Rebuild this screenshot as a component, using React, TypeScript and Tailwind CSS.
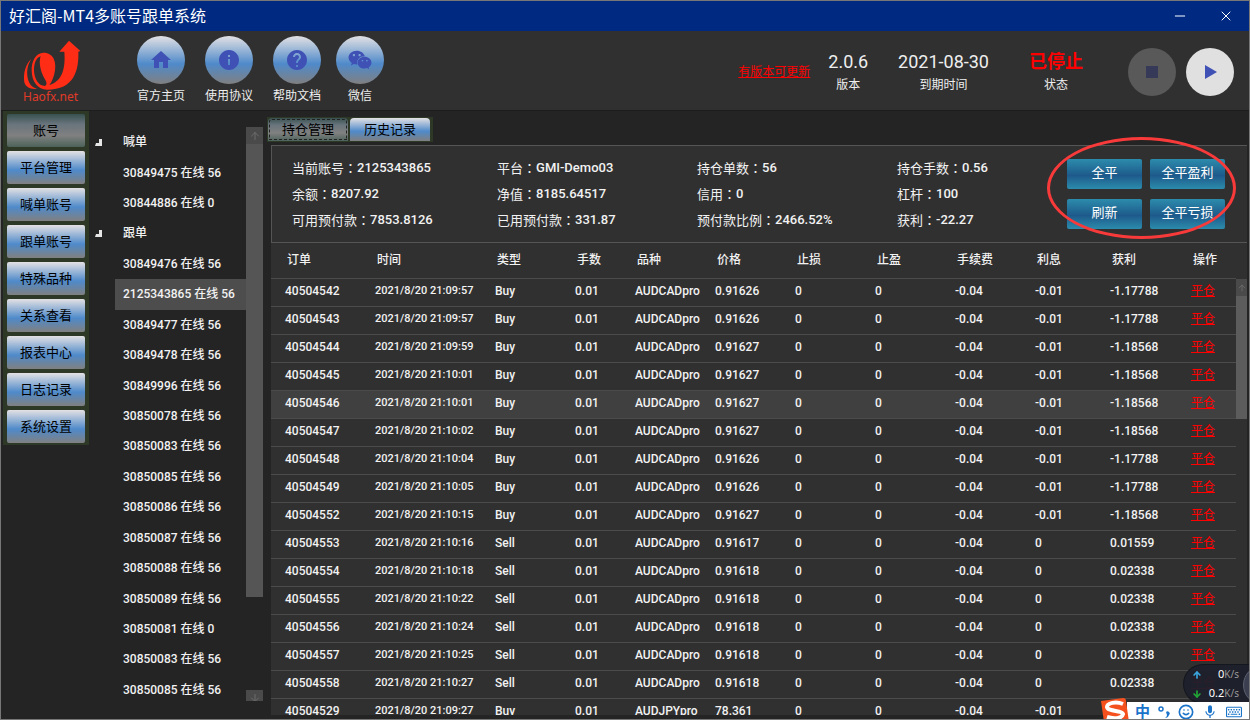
import React from 'react';
import { ArrowDown, ArrowUp, Minus, Smile, X } from 'lucide-react';
import { MdHelp, MdHome, MdInfo, MdMic } from 'react-icons/md';
import { FaRegKeyboard, FaWeixin } from 'react-icons/fa';

const glossy = 'bg-[linear-gradient(180deg,#e3e1e3_0%,#4f8aca_58%,#808080_100%)]';
const glossyActive = 'bg-[linear-gradient(180deg,#38504f_0%,#68747c_30%,#808080_65%,#4c635a_100%)]';

const shortcuts = [
  { label: '官方主页', icon: MdHome, gap: 'mr-5' },
  { label: '使用协议', icon: MdInfo, gap: 'mr-5' },
  { label: '帮助文档', icon: MdHelp, gap: 'mr-[15px]' },
  { label: '微信', icon: FaWeixin, gap: '' },
];

const menu = ['账号', '平台管理', '喊单账号', '跟单账号', '特殊品种', '关系查看', '报表中心', '日志记录', '系统设置'];

const tree = [
  { label: '喊单', group: true },
  { label: '30849475 在线 56' },
  { label: '30844886 在线 0' },
  { label: '跟单', group: true },
  { label: '30849476 在线 56' },
  { label: '2125343865 在线 56' },
  { label: '30849477 在线 56' },
  { label: '30849478 在线 56' },
  { label: '30849996 在线 56' },
  { label: '30850078 在线 56' },
  { label: '30850083 在线 56' },
  { label: '30850085 在线 56' },
  { label: '30850086 在线 56' },
  { label: '30850087 在线 56' },
  { label: '30850088 在线 56' },
  { label: '30850089 在线 56' },
  { label: '30850081 在线 0' },
  { label: '30850083 在线 56' },
  { label: '30850085 在线 56' },
];

const summary = [
  ['当前账号', '2125343865'],
  ['平台', 'GMI-Demo03'],
  ['持仓单数', '56'],
  ['持仓手数', '0.56'],
  ['余额', '8207.92'],
  ['净值', '8185.64517'],
  ['信用', '0'],
  ['杠杆', '100'],
  ['可用预付款', '7853.8126'],
  ['已用预付款', '331.87'],
  ['预付款比例', '2466.52%'],
  ['获利', '-22.27'],
];

const columns = [
  { label: '订单', width: 'w-[90px]' },
  { label: '时间', width: 'w-[120px]' },
  { label: '类型', width: 'w-20' },
  { label: '手数', width: 'w-[60px]' },
  { label: '品种', width: 'w-20' },
  { label: '价格', width: 'w-20' },
  { label: '止损', width: 'w-20' },
  { label: '止盈', width: 'w-20' },
  { label: '手续费', width: 'w-20' },
  { label: '利息', width: 'w-[75px]' },
  { label: '获利', width: 'w-[81px]' },
  { label: '操作', width: '' },
];

// id, time, side, symbol, price, swap, profit
const orders = [
  ['40504542', '21:09:57', 'Buy', 'AUDCADpro', '0.91626', '-0.01', '-1.17788'],
  ['40504543', '21:09:57', 'Buy', 'AUDCADpro', '0.91626', '-0.01', '-1.17788'],
  ['40504544', '21:09:59', 'Buy', 'AUDCADpro', '0.91627', '-0.01', '-1.18568'],
  ['40504545', '21:10:01', 'Buy', 'AUDCADpro', '0.91627', '-0.01', '-1.18568'],
  ['40504546', '21:10:01', 'Buy', 'AUDCADpro', '0.91627', '-0.01', '-1.18568'],
  ['40504547', '21:10:02', 'Buy', 'AUDCADpro', '0.91627', '-0.01', '-1.18568'],
  ['40504548', '21:10:04', 'Buy', 'AUDCADpro', '0.91626', '-0.01', '-1.17788'],
  ['40504549', '21:10:05', 'Buy', 'AUDCADpro', '0.91626', '-0.01', '-1.17788'],
  ['40504552', '21:10:15', 'Buy', 'AUDCADpro', '0.91627', '-0.01', '-1.18568'],
  ['40504553', '21:10:16', 'Sell', 'AUDCADpro', '0.91617', '0', '0.01559'],
  ['40504554', '21:10:18', 'Sell', 'AUDCADpro', '0.91618', '0', '0.02338'],
  ['40504555', '21:10:22', 'Sell', 'AUDCADpro', '0.91618', '0', '0.02338'],
  ['40504556', '21:10:24', 'Sell', 'AUDCADpro', '0.91618', '0', '0.02338'],
  ['40504557', '21:10:25', 'Sell', 'AUDCADpro', '0.91618', '0', '0.02338'],
  ['40504558', '21:10:27', 'Sell', 'AUDCADpro', '0.91618', '0', '0.02338'],
  ['40504529', '21:09:27', 'Buy', 'AUDJPYpro', '78.361', '-0.01', ''],
];

function Logo() {
  return (
    <svg viewBox="68 115 174 150" className="w-[58px] text-[#ff2d16]" fill="currentColor">
      <path
        fillRule="evenodd"
        d="M206 117 L240 148 L234 150 C236 205 222 264 140 264 C112 264 95 240 94 208 C93 178 106 153 130 153 C160 153 168 182 164 206 C161 226 155 240 147 250 C186 238 196 200 192 150 L177 150 Z M121 164 C107 168 101 186 101 206 C102 232 114 253 134 253 C142 248 138 240 132 230 C122 212 114 184 121 164 Z"
      />
      <path d="M93 172 C76 186 68 216 72 242 C76 258 94 264 110 261 C92 256 83 242 81 222 C79 202 84 186 93 172 Z" />
    </svg>
  );
}

function Header() {
  return (
    <header className="flex h-20 shrink-0 items-center border-b border-[#1d1d1d] bg-[#303030]">
      <div className="ml-[22px] w-[60px] pt-0.5">
        <Logo />
        <div className="font-['Noto_Sans',sans-serif] text-xs leading-[14px] text-[#e03a28]">Haofx.net</div>
      </div>
      <nav className="ml-[54px] flex">
        {shortcuts.map((s) => {
          const Icon = s.icon;
          return (
            <button key={s.label} className={`flex flex-col items-center text-xs text-[#eee] ${s.gap}`}>
              <span className={`flex size-12 items-center justify-center rounded-full ${glossy}`}>
                <Icon className="size-6 text-[#3f51b5]" />
              </span>
              <span className="mt-[3px] leading-[18px]">{s.label}</span>
            </button>
          );
        })}
      </nav>
      <div className="ml-auto flex items-center pt-0.5 pr-[15px] text-xs text-[#eee]">
        <a href="#update" className="mr-[18px] text-[#f00] underline">有版本可更新</a>
        <div className="mr-[30px] pt-[3px] text-center">
          <div className="text-lg leading-6">2.0.6</div>
          <div className="leading-[22px]">版本</div>
        </div>
        <div className="mr-10 pt-[3px] text-center">
          <div className="text-lg leading-6">2021-08-30</div>
          <div className="leading-[22px]">到期时间</div>
        </div>
        <div className="mr-[45px] pt-[3px] text-center">
          <div className="text-lg leading-6 font-bold text-[#f00]">已停止</div>
          <div className="leading-[22px]">状态</div>
        </div>
        <button aria-label="停止" className="mr-2.5 flex size-12 items-center justify-center rounded-full bg-[#595959]">
          <span className="size-3 bg-[#363a58]" />
        </button>
        <button aria-label="启动" className="flex size-12 items-center justify-center rounded-full bg-[#e0e0e0]">
          <svg viewBox="0 0 12 14" className="ml-0.5 h-3.5 w-3" fill="#3f51b5">
            <path d="M0 0 L12 7 L0 14 Z" />
          </svg>
        </button>
      </div>
    </header>
  );
}

function SideMenu() {
  const [active, setActive] = React.useState('账号');
  return (
    <nav className="ml-0.5 flex w-[86px] shrink-0 flex-col gap-1 self-start bg-[#2e3827] px-1 pt-[3px] pb-0.5">
      {menu.map((item) => (
        <button
          key={item}
          onClick={() => setActive(item)}
          className={`h-[33px] rounded-xs text-[13px] text-black ${active === item ? glossyActive : glossy}`}
        >
          {item}
        </button>
      ))}
    </nav>
  );
}

function AccountTree() {
  return (
    <div className="flex w-[174px] shrink-0 pt-4 pb-[14px]">
      <ul className="flex flex-1 flex-col text-xs font-medium text-[#f2f2f2]">
        {tree.map((node, i) => (
          <li key={i} className="flex flex-1 items-center">
            <span className="flex w-[26px] justify-center pr-2">
              {node.group && (
                <button aria-label={`折叠${node.label}`}>
                  <svg viewBox="0 0 7 7" className="size-[7px]" fill="#e6e6e6">
                    <path d="M4 0 H7 V7 H0 L1 4 H4 Z" />
                  </svg>
                </button>
              )}
            </span>
            <span className={`flex flex-1 items-center self-stretch pl-2 whitespace-nowrap ${i === 5 ? 'bg-[#4d4d4d]' : ''}`}>
              {node.label}
            </span>
          </li>
        ))}
      </ul>
      <div className="flex w-[17px] flex-col justify-between">
        <div className="flex h-[470px] justify-center bg-[#555]">
          <span className="flex h-[17px] w-full items-center justify-center bg-[#4a4a4a]">
            <ArrowUp className="size-3 text-[#6c6c6c]" />
          </span>
        </div>
        <div className="mb-1 flex h-[11px] justify-center overflow-hidden bg-[#4a4a4a]">
          <ArrowDown className="mt-0.5 size-3 shrink-0 text-[#6c6c6c]" />
        </div>
      </div>
    </div>
  );
}

function Summary() {
  const action = 'h-[30px] rounded-xs bg-[linear-gradient(180deg,#2c8cad_0%,#1d5a8b_55%,#2c8cad_100%)] pb-0.5 text-[13px] text-white';
  return (
    <section className="flex h-[98px] shrink-0 border border-r-0 border-[#555] bg-[#303030] pt-[10px]">
      <dl className="grid grid-cols-[205px_200px_200px_150px] content-start gap-y-px pl-5 text-[13px] leading-6 text-[#f2f2f2]">
        {summary.map(([label, value]) => (
          <div key={label} className="flex h-[25px]">
            <dt>
              {label}
              <span className="font-['Noto_Sans_CJK_TC',sans-serif]">：</span>
            </dt>
            <dd className="font-medium">{value}</dd>
          </div>
        ))}
      </dl>
      <div className="relative mt-[3px] mr-[22px] ml-auto grid grid-cols-[75px_75px] content-start gap-x-2 gap-y-2.5 self-start">
        <button className={action}>全平</button>
        <button className={action}>全平盈利</button>
        <button className={action}>刷新</button>
        <button className={action}>全平亏损</button>
        <div className="pointer-events-none absolute -top-[22px] -right-[11px] -bottom-[10px] -left-5 rounded-[50%] border-[3px] border-[#f93a3a]" />
      </div>
    </section>
  );
}

function OrdersTable() {
  return (
    <section className="relative min-h-0 flex-1 overflow-hidden bg-[#303030]">
      <div className="pr-[11px]">
        <table className="w-full table-fixed border-collapse text-left text-xs leading-4 text-[#f2f2f2]">
          <thead>
            <tr className="h-[35px] border-b border-[#4b4b4b]">
              {columns.map((c) => (
                <th key={c.label} className={`pl-4 font-medium ${c.width}`}>{c.label}</th>
              ))}
            </tr>
          </thead>
          <tbody className="font-medium">
            {orders.map(([id, time, side, symbol, price, swap, profit], i) => (
              <tr key={id} className={`h-7 border-b border-[#4b4b4b] *:pb-[3px] *:pl-3.5 ${i === 4 ? 'bg-[#404040]' : ''}`}>
                <td>{id}</td>
                <td className="text-[11px] whitespace-nowrap">2021/8/20 {time}</td>
                <td>{side}</td>
                <td>0.01</td>
                <td>{symbol}</td>
                <td>{price}</td>
                <td>0</td>
                <td>0</td>
                <td>-0.04</td>
                <td>{swap}</td>
                <td>{profit}</td>
                <td>
                  {profit && <a href="#close" className="font-normal text-[#f00] underline">平仓</a>}
                </td>
              </tr>
            ))}
          </tbody>
        </table>
      </div>
      <div className="absolute top-9 right-0 h-[140px] w-[11px] bg-[#5c5c5c]">
        <span className="flex h-[17px] items-center justify-center bg-[#4a4a4a]">
          <ArrowUp className="size-2.5 text-[#6c6c6c]" />
        </span>
      </div>
    </section>
  );
}

function NetSpeed() {
  return (
    <div className="absolute right-0 bottom-[15px] flex h-10 w-[66px] overflow-hidden rounded-l-[20px] border border-r-0 border-[#15171f] bg-[#1e202b]/95 font-['Noto_Sans',sans-serif] text-[11px] text-white">
      <div className="flex flex-1 flex-col pr-1 pl-2">
        <div className="flex flex-1 items-center justify-between">
          <ArrowUp className="size-2.5 text-[#3aa5dd]" strokeWidth={4} />
          <span>0<span className="text-[10px] text-[#999]">K/s</span></span>
        </div>
        <div className="flex flex-1 items-center justify-between">
          <ArrowDown className="size-2.5 text-[#21a637]" strokeWidth={4} />
          <span>0.2<span className="text-[10px] text-[#999]">K/s</span></span>
        </div>
      </div>
      <div className="-mr-[34px] size-10 shrink-0 rounded-full border border-[#5b6070] bg-[#3a3e4e]" />
    </div>
  );
}

function InputBar() {
  return (
    <div className="absolute right-0 bottom-0 flex h-[17px] w-[122px] items-center gap-2 bg-white pt-0.5 pl-2 text-[#1b74c9]">
      <svg viewBox="0 0 28 24" className="absolute -top-1 -left-[26px] h-6 w-7">
        <path d="M0 3 L22 0 Q25 0 25 3 L28 24 H3 Z" fill="#f4511e" />
        <path d="M22 6 C15 3 6 5 6 9 C7 14 21 12 22 16 C21 21 12 21 6 19" fill="none" stroke="#fff" strokeWidth="4" />
      </svg>
      <span className="text-[15px] leading-4 font-bold">中</span>
      <svg viewBox="0 0 12 14" className="h-3.5 w-3">
        <circle cx="3" cy="4" r="2" fill="none" stroke="currentColor" strokeWidth="1.5" />
        <path d="M8 7 a2 2 0 1 1 3 3 Q10 13 7 13 Q9 12 9 10 Z" fill="currentColor" />
      </svg>
      <Smile className="size-4 shrink-0" strokeWidth={2.5} />
      <MdMic className="size-4 shrink-0" />
      <FaRegKeyboard className="size-4 shrink-0" />
    </div>
  );
}

export default function App() {
  const [tab, setTab] = React.useState('持仓管理');

  return (
    <div className="relative flex h-screen flex-col overflow-hidden border border-[#777] bg-[#242424] font-['Roboto','Noto_Sans_CJK_SC',sans-serif]">
      <div className="flex h-[30px] shrink-0 items-center bg-[#002a82] pl-2 text-white">
        <h1 className="flex-1 pb-0.5 font-['Noto_Sans_CJK_SC',sans-serif] text-base leading-6">好汇阁-MT4多账号跟单系统</h1>
        <button aria-label="最小化" className="mr-[30px]"><Minus className="size-4" strokeWidth={1.5} /></button>
        <button aria-label="关闭" className="mr-[15px]"><X className="size-4" strokeWidth={1.5} /></button>
      </div>
      <Header />
      <div className="flex min-h-0 flex-1">
        <SideMenu />
        <AccountTree />
        <main className="ml-1 flex min-w-0 flex-1 flex-col pt-1.5 pr-0.5 pb-1">
          <div className="flex h-[25px] shrink-0 self-start bg-[#2e3827] px-px">
            {['持仓管理', '历史记录'].map((t) => (
              <button
                key={t}
                onClick={() => setTab(t)}
                className={`mt-px mr-0.5 h-[23px] w-20 rounded-t-sm text-[13px] text-black ${
                  tab === t ? `outline-1 -outline-offset-2 outline-dashed outline-[#222] ${glossyActive}` : glossy
                }`}
              >
                {t}
              </button>
            ))}
          </div>
          <div className="mt-[3px] ml-1 flex min-h-0 flex-1 flex-col">
            <Summary />
            <OrdersTable />
          </div>
        </main>
      </div>
      <NetSpeed />
      <InputBar />
    </div>
  );
}
